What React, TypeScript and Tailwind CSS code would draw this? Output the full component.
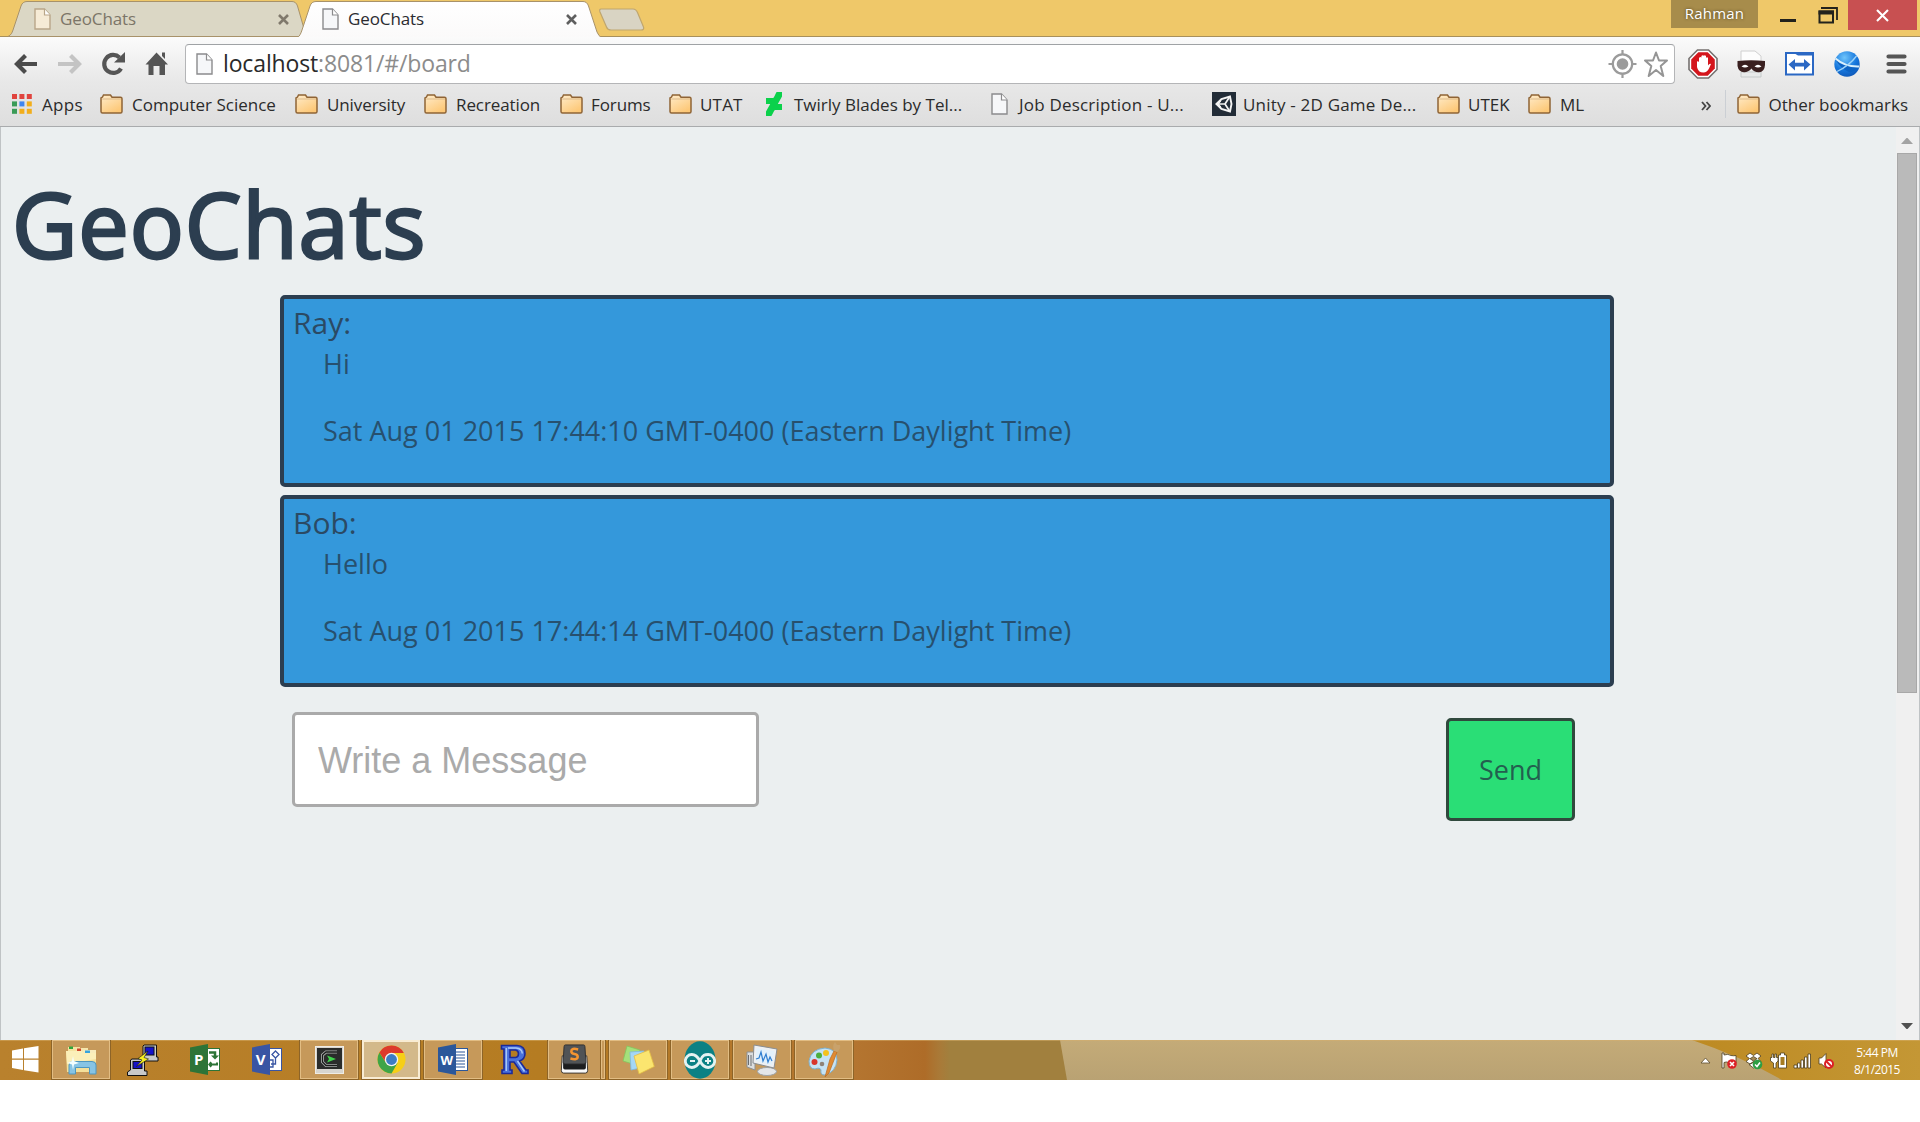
import type { ReactNode } from 'react';

/* ---------- small drawings ---------- */

function PageIcon({ faded = false }: { faded?: boolean }) {
  return (
    <svg width="17" height="22" viewBox="0 0 17 22" className="block shrink-0">
      <path
        d="M1 1H10.5L16 7V21H1Z"
        fill={faded ? '#f6ebd6' : '#f6f7f9'}
        stroke={faded ? '#b9a689' : '#8b8b8d'}
        strokeWidth="1.4"
      />
      <path d="M10.5 1V7H16" fill="#fff" stroke={faded ? '#b9a689' : '#8b8b8d'} strokeWidth="1.2" />
    </svg>
  );
}

function FolderIcon() {
  return (
    <svg width="23" height="20" viewBox="0 0 23 20" className="block shrink-0">
      <defs>
        <linearGradient id="folder" x1="0" y1="0" x2="0.6" y2="1">
          <stop offset="0" stopColor="#ffeccb" />
          <stop offset="1" stopColor="#fdc877" />
        </linearGradient>
      </defs>
      <path
        d="M1 17.5V4L2.5 3L3.5 1H10.5L12 3.2H20.5Q22 3.2 22 4.8V17.5Q22 19 20.5 19H2.5Q1 19 1 17.5Z"
        fill="url(#folder)"
        stroke="#8f6436"
        strokeWidth="1.5"
      />
      <path d="M2.2 5H21" stroke="#d9b98c" strokeWidth="1" />
    </svg>
  );
}

function AppsIcon() {
  const colors = ['#e0443e', '#e0443e', '#e0443e', '#3a9b57', '#3f86f2', '#f2ae1c', '#3a9b57', '#f2ae1c', '#f2ae1c'];
  return (
    <svg width="20" height="20" viewBox="0 0 20 20" className="block shrink-0">
      {colors.map((c, i) => (
        <rect key={i} x={(i % 3) * 7.4} y={Math.floor(i / 3) * 7.4} width="5" height="5" fill={c} />
      ))}
    </svg>
  );
}

function DeviantArtIcon() {
  return (
    <svg width="16" height="24" viewBox="0 0 16 24" className="block shrink-0">
      <path
        d="M16 0V4.5L11.8 12H16V18H9L8.2 18.8L6 23L5.4 24H0V19.6L4.2 12H0V6H7L7.8 5.4L10 1L10.6 0Z"
        fill="#0bd14b"
      />
    </svg>
  );
}

function UnityIcon() {
  return (
    <svg width="24" height="24" viewBox="0 0 24 24" className="block shrink-0">
      <rect width="24" height="24" fill="#222c37" />
      <path
        d="M5 12L9.500 7L18 4.500L19.500 12L18 19.500L9.500 17Z"
        fill="none"
        stroke="#f4f4f4"
        strokeWidth="1.900"
      />
      <path d="M5 12H13M13 12L17.500 5M13 12L17.500 19" stroke="#f4f4f4" strokeWidth="1.700" />
      <path d="M3 12L9 6.5V9.5L7 12L9 14.5V17.5Z" fill="#f4f4f4" />
    </svg>
  );
}

/* ---------- browser chrome ---------- */

function Tab({ active = false }: { active?: boolean }) {
  return (
    <div className={active ? 'relative z-10 -ml-[9px] h-[37px] w-[305px]' : 'relative ml-2 h-[37px] w-[298px]'}>
      <svg
        className="absolute inset-0"
        width={active ? 305 : 298}
        height="37"
        viewBox={active ? '0 0 305 37' : '0 0 298 37'}
      >
        <defs>
          <linearGradient id="activeTab" x1="0" y1="0" x2="0" y2="1">
            <stop offset="0" stopColor="#ffffff" />
            <stop offset="1" stopColor="#fbfafa" />
          </linearGradient>
        </defs>
        <path
          d={
            active
              ? 'M0 38C3 36 4 33 5 30L13 6Q14.500 1.500 19 1.500H286Q290 1.500 291.500 6L300 32Q301.500 36 305 38Z'
              : 'M0 36.500C3 35 4 33 5 30L13 6Q14.500 1.500 19 1.500H284Q288 1.500 289.500 6L297 32L298 36.500Z'
          }
          fill={active ? 'url(#activeTab)' : '#dbd7c5'}
          stroke="#a8926a"
          strokeWidth="1"
        />
      </svg>
      <div className={active ? 'relative flex h-[37px] items-center pl-[25px]' : 'relative flex h-[37px] items-center pl-[26px]'}>
        <PageIcon faded={!active} />
        <span
          className={
            active
              ? 'ml-[9px] w-[218px] text-[17px] tracking-[-0.1px] text-[#2b2b30]'
              : 'ml-[9px] w-[218px] text-[17px] tracking-[-0.1px] text-[#7b7568]'
          }
        >
          GeoChats
        </span>
        <svg width="11" height="11" viewBox="0 0 11 11" className="mt-[2px]">
          <path d="M1 1L10 10M10 1L1 10" stroke={active ? '#5f5f5f' : '#80796c'} strokeWidth="2.6" />
        </svg>
      </div>
    </div>
  );
}

function TitleBar() {
  return (
    <div className="flex h-[37px] items-start border-b border-[#a8905c] bg-[#efc869]">
      <Tab />
      <Tab active />
      <svg width="48" height="23" viewBox="0 0 48 23" className="mt-2 -ml-[4px]">
        <path
          d="M3 1H35Q38 1 39.500 4.500L45.500 19Q46.500 22 43 22H13Q9.500 22 8.500 19L2 4Q1 1 3 1Z"
          fill="#d9d4c3"
          stroke="#bfa66f"
          strokeWidth="1.200"
        />
      </svg>
      <div className="ml-auto flex items-start">
        <div className="flex h-[28px] w-[87px] items-center justify-center bg-[#a78c4b] pb-px text-[15px] text-white [text-shadow:0_0_3px_#4c3e1e]">
          <span className="tracking-[0.2px]">Rahman</span>
        </div>
        <svg width="90" height="30" viewBox="0 0 90 30">
          <rect x="22" y="19" width="16" height="3" fill="#22221c" />
          <path d="M63 8H79V20" fill="none" stroke="#22221c" strokeWidth="1.800" />
          <rect x="61.500" y="11.500" width="13.500" height="11" fill="none" stroke="#22221c" strokeWidth="2" />
          <rect x="60.500" y="10.500" width="15.500" height="4" fill="#22221c" />
        </svg>
        <div className="mr-[3px] flex h-[30px] w-[69px] items-center justify-center bg-[#c85051]">
          <svg width="13" height="13" viewBox="0 0 13 13">
            <path d="M1 1L12 12M12 1L1 12" stroke="#fff" strokeWidth="2.100" />
          </svg>
        </div>
      </div>
    </div>
  );
}

function Toolbar() {
  return (
    <div className="flex h-[50px] items-center pt-[3px]">
      <svg width="185" height="40" viewBox="0 0 185 40" className="block shrink-0">
        <path d="M37 20H18M25.500 11.500L17 20L25.500 28.500" fill="none" stroke="#4b4b4b" strokeWidth="4.200" />
        <path d="M58 20H78M70.500 11.500L79 20L70.500 28.500" fill="none" stroke="#c4c4c4" strokeWidth="4.200" />
        <path d="M121 24.500A9 9 0 1 1 119.500 13.500" fill="none" stroke="#555" strokeWidth="4.200" />
        <path d="M125 8V18.500H114Z" fill="#555" />
        <path d="M156.500 8.500L168 20.500H165V31H159.500V22H153.500V31H148.500V20.500H145.500Z" fill="#555" />
        <path d="M162 8.500H165V15L162 12Z" fill="#555" />
      </svg>
      <div className="flex h-[40px] w-[1490px] items-center rounded-[4px] border-[1.5px] border-[#b4b5b7] border-t-[#9fa2a5] bg-white pl-[10px]">
        <PageIcon />
        <span className="ml-[10px] text-[23px] leading-none tracking-[-0.14px] text-[#8c8c8c]">
          <span className="text-[#2a2a2a]">localhost</span>:8081/#/board
        </span>
        <svg width="60" height="34" viewBox="0 0 60 34" className="mr-[5px] ml-auto overflow-visible">
          <circle cx="13.500" cy="17" r="9.700" fill="none" stroke="#9b9b9b" strokeWidth="2.200" />
          <circle cx="13.500" cy="17" r="5.800" fill="#9b9b9b" />
          <path d="M13.500 3V8M13.500 26V31M-.5 17H4M23 17H27.500" stroke="#9b9b9b" strokeWidth="2.200" />
          <path
            d="M47 5.500L50 13.500H58L51.700 19L54.300 29L47 23L39.700 29L42.300 19L36 13.500H44Z"
            fill="#fff"
            stroke="#959595"
            strokeWidth="2"
            strokeLinejoin="round"
          />
        </svg>
      </div>
      <svg width="245" height="40" viewBox="1 0 245 40" className="block shrink-0">
        <defs>
          <radialGradient id="globe" cx="0.4" cy="0.25" r="0.8">
            <stop offset="0" stopColor="#6fc4fb" />
            <stop offset="0.6" stopColor="#1677dd" />
            <stop offset="1" stopColor="#0f57b6" />
          </radialGradient>
        </defs>
        <path d="M23.500 6H34.500L43 14.500V25.500L34.500 34H23.500L15 25.500V14.500Z" fill="#fff" stroke="#75706f" strokeWidth="1.600" />
        <path d="M24.300 8.300H33.700L40.800 15.400V24.600L33.700 31.700H24.300L17.200 24.600V15.400Z" fill="#d4151c" />
        <path
          d="M23 17.500V23Q24 28.500 29.500 28.500Q33 28.500 35 24.500L37 20Q35.500 18.800 34 21.500V13.800Q33 12.600 32 13.800V12Q30.800 10.700 29.700 12V11.500Q28.400 10.700 27.400 12V13.500Q26.200 12.500 25 14V18Q24 16.800 23 17.500Z"
          fill="#fff"
        />
        <path d="M67 20V7H81L87 12V20Z" fill="#fdfdfd" stroke="#d0d0d0" />
        <path d="M67 28H87V33H67Z" fill="#e8eaea" stroke="#c5caca" />
        <path d="M63.500 17Q77 15.500 91 17V21Q90.500 28 85 28.300Q80 28.500 77.500 24.500Q74 28.500 70 28.300Q64.500 28 63.500 22Z" fill="#3a2020" />
        <path d="M67.500 22.500Q71 19 74.500 22.500Q71 24.500 67.500 22.500ZM80.500 22.500Q84 19 87.500 22.500Q84 24.500 80.500 22.500Z" fill="#fff" />
        <rect x="112" y="9" width="27" height="21.500" fill="#fff" stroke="#2b68c4" strokeWidth="2" />
        <path d="M111 8H140V11.500H124L121 9.800H111Z" fill="#2b68c4" />
        <path d="M114.500 20.500L121 15V18.800H130V15L136.500 20.500L130 26.500V22.500H121V26.500Z" fill="#2b68c4" />
        <circle cx="173" cy="20" r="12.700" fill="url(#globe)" />
        <path d="M161 15Q172 22 185 22Q180 29 175 28Q167 25 161 15Z" fill="#0d63c4" />
        <path d="M161.500 14.500Q171 23 185 22.500" fill="none" stroke="#d9f0fd" strokeWidth="2" />
        <path d="M163 27.500Q175 22 182.500 12" fill="none" stroke="#9fd4f8" strokeWidth="1.300" />
        <path d="M214.500 12.500H230.500M214.500 20H230.500M214.500 27.500H230.500" stroke="#555" strokeWidth="4.200" strokeLinecap="round" />
      </svg>
    </div>
  );
}

function Bookmark({ icon, label, className }: { icon: ReactNode; label: string; className: string }) {
  return (
    <div className={`flex h-full shrink-0 items-center whitespace-nowrap ${className}`}>
      {icon}
      <span className="pt-[2px]">{label}</span>
    </div>
  );
}

function BookmarksBar() {
  return (
    <div className="flex h-[39px] items-center pb-[5px] pl-[12px] text-[17px] text-[#2b2b2b]">
      <Bookmark className="w-[88px] gap-[10px] tracking-[0.3px]" icon={<AppsIcon />} label="Apps" />
      <Bookmark className="w-[195px] gap-[9px]" icon={<FolderIcon />} label="Computer Science" />
      <Bookmark className="w-[129px] gap-[9px] tracking-[-0.1px]" icon={<FolderIcon />} label="University" />
      <Bookmark className="w-[136px] gap-[9px] tracking-[-0.1px]" icon={<FolderIcon />} label="Recreation" />
      <Bookmark className="w-[109px] gap-[8px] tracking-[-0.1px]" icon={<FolderIcon />} label="Forums" />
      <Bookmark className="w-[97px] gap-[8px] tracking-[0.2px]" icon={<FolderIcon />} label="UTAT" />
      <Bookmark className="w-[225px] gap-[12px]" icon={<DeviantArtIcon />} label="Twirly Blades by Tel..." />
      <Bookmark className="w-[221px] gap-[11px] tracking-[0.2px]" icon={<PageIcon />} label="Job Description - U..." />
      <Bookmark className="w-[225px] gap-[7px] tracking-[0.2px]" icon={<UnityIcon />} label="Unity - 2D Game De..." />
      <Bookmark className="w-[91px] gap-[8px]" icon={<FolderIcon />} label="UTEK" />
      <Bookmark className="gap-[9px]" icon={<FolderIcon />} label="ML" />
      <svg width="10" height="10" viewBox="0 0 10 10" className="mt-[3px] ml-auto shrink-0">
        <path d="M1 1L4.500 5L1 9M5.500 1L9 5L5.500 9" fill="none" stroke="#444" strokeWidth="1.800" />
      </svg>
      <div className="mr-[11px] ml-[14px] h-[28px] w-px bg-[#cbcfd4]" />
      <Bookmark className="mr-[12px] gap-[8px]" icon={<FolderIcon />} label="Other bookmarks" />
    </div>
  );
}

/* ---------- chat page ---------- */

function Message({ author, text, time }: { author: string; text: string; time: string }) {
  return (
    <article className="h-[192px] rounded-[5px] border-4 border-[#2c3e50] bg-[#3498db] pl-[9px] text-[27px] text-[#27506e]">
      <div className="mt-[2px] h-[44px] text-[30px] leading-[44px] text-[#2b4a64]">{author}:</div>
      <p className="h-[37px] pl-[30px] leading-[37px]">{text}</p>
      <p className="mt-[30px] h-[37px] pl-[30px] leading-[37px]">{time}</p>
    </article>
  );
}

function Board() {
  return (
    <main className="flex-1">
      <h1 className="mt-[36px] ml-[11px] h-[120px] text-[90px] leading-[120px] tracking-[0.9px] text-[#2c3e50] [-webkit-text-stroke:2.8px_#2c3e50]">
        GeoChats
      </h1>
      <div className="mt-[12px] ml-[279px] w-[1334px] space-y-[8px]">
        <Message author="Ray" text="Hi" time="Sat Aug 01 2015 17:44:10 GMT-0400 (Eastern Daylight Time)" />
        <Message author="Bob" text="Hello" time="Sat Aug 01 2015 17:44:14 GMT-0400 (Eastern Daylight Time)" />
      </div>
      <form className="mt-[25px] ml-[291px] flex w-[1283px] items-start justify-between">
        <input
          type="text"
          placeholder="Write a Message"
          className="h-[95px] w-[467px] rounded-[5px] border-[3px] border-[#aaaaaa] bg-white pt-[2px] pl-[23px] font-['Liberation_Sans',sans-serif] text-[36px] placeholder:text-[#aaaaaa]"
        />
        <button
          type="button"
          className="mt-[6px] h-[103px] w-[129px] rounded-[5px] border-[3px] border-[#30493d] bg-[#2ade76] pt-[2px] text-[27px] text-[#235f4f]"
        >
          Send
        </button>
      </form>
    </main>
  );
}

function Scrollbar() {
  return (
    <div className="flex w-[23px] flex-col items-center bg-[#f0f0f0] pr-px">
      <svg width="14" height="8" viewBox="0 0 14 8" className="mt-[10px]">
        <path d="M1 7L6.500 1H7.500L13 7Z" fill="#a3a3a3" />
      </svg>
      <div className="mt-[8px] h-[540px] w-[20px] border border-[#a8a8a8] bg-[#bababa]" />
      <svg width="14" height="8" viewBox="0 0 14 8" className="mt-auto mb-[10px]">
        <path d="M1 1H13L7.500 7H6.500Z" fill="#505050" />
      </svg>
    </div>
  );
}

/* ---------- taskbar ---------- */

function TaskButton({ state = 'idle', className, children }: { state?: 'idle' | 'open' | 'active'; className: string; children: ReactNode }) {
  const look =
    state === 'active'
      ? 'border-2 border-[#f8ecd3] bg-[#d3b98a] shadow-[0_0_0_1px_#8d6428]'
      : state === 'open'
        ? 'border border-[#e2bd83] bg-[#c6995a] shadow-[0_0_0_1px_#8d6428]'
        : '';
  return <div className={`flex h-[39px] shrink-0 items-center justify-center ${look} ${className}`}>{children}</div>;
}

function StartIcon() {
  return (
    <svg width="27" height="27" viewBox="0 0 27 27">
      <path d="M0 4.500L11 2.500V12.500H0ZM12 2.300L26.500 0V12.500H12ZM0 13.700H11V24L0 22ZM12 13.700H26.500V26.500L12 24.200Z" fill="#fff" />
    </svg>
  );
}

function ExplorerIcon() {
  return (
    <svg width="32" height="30" viewBox="0 0 32 30">
      <path d="M3 2H15V8H3Z" fill="#f5e3a0" />
      <path d="M4 1.500H8V4H4Z" fill="#2fa63c" />
      <path d="M11 3H23V9H11Z" fill="#f5e6ac" />
      <path d="M12 3.500H16V6H12Z" fill="#d1452b" />
      <path d="M18 5H31V10H18Z" fill="#f7ebbc" />
      <path d="M20 5.500H25V8H20Z" fill="#37a3dc" />
      <path d="M1 6H17L19 8H31V27H2Z" fill="#f4e09a" />
      <path d="M1 6H17L19 8H31V14L2 19Z" fill="#fbefb9" />
      <path d="M4 29V20Q4 16.500 8 16.500H27Q31 16.500 31 20V29H24.500V22.500H10.500V29Z" fill="#87c4e4" stroke="#4e97bf" />
      <path d="M8 11L9 16L14 18L9 19.500L8 25L7 19.500L2.500 18L7 16Z" fill="#f4ffff" />
    </svg>
  );
}

function PuttyIcon() {
  return (
    <svg width="32" height="32" viewBox="0 0 32 32" stroke="#111" strokeWidth="1">
      <path d="M17 1H29.500V13H31V17H14V13H16V2Z" fill="#c9c9c9" />
      <rect x="18" y="3" width="9" height="8" fill="#1512c9" />
      <path d="M5 15H17.500V27H20V31.500H.5V28L3.500 26V16Z" fill="#c9c9c9" />
      <rect x="6" y="17.500" width="9" height="7" fill="#1512c9" />
      <path d="M21 7L11 14.500L15 16L9.500 22.500L21.500 15L17 13.500Z" fill="#f7ef22" strokeWidth=".6" />
    </svg>
  );
}

function OfficeIcon({ letter, kind }: { letter: string; kind: 'project' | 'visio' | 'word' }) {
  const color = kind === 'project' ? '#2d7437' : kind === 'visio' ? '#3955a3' : '#2b579a';
  return (
    <svg width="30" height="31" viewBox="0 0 30 31">
      <rect x="16" y="4.500" width="13.500" height="22" fill="#fff" stroke={color} />
      {kind === 'project' && (
        <>
          <path d="M19 8.500H25V12" fill="none" stroke={color} strokeWidth="2.500" />
          <path d="M21 11.500H29L25 15.500Z" fill={color} />
          <path d="M27 18.500V20.500H23" fill="none" stroke={color} strokeWidth="2" />
          <path d="M20.500 17.500L23.500 20.500L20.500 23.500L18 20.500Z" fill={color} />
        </>
      )}
      {kind === 'visio' && (
        <path d="M23.500 7L27 10.500L23.500 14L20 10.500ZM23.500 14V20H19M17 16H21V23H17" fill="none" stroke={color} strokeWidth="1.300" />
      )}
      {kind === 'word' && (
        <path d="M18 8H27M18 11H27M18 14H27M18 17H27M18 20H27M18 23H27" stroke={color} strokeWidth="1.200" />
      )}
      <path d="M0 3.500L18 0V31L0 27.500Z" fill={color} />
      <text x="8.700" y="20.500" textAnchor="middle" fill="#fff" fontFamily="Open Sans, sans-serif" fontWeight="700" fontSize={kind === 'word' ? 13 : 15}>
        {letter}
      </text>
    </svg>
  );
}

function CmderIcon() {
  return (
    <svg width="29" height="28" viewBox="0 0 29 28">
      <rect x=".5" y=".5" width="28" height="27" fill="#d7d5cf" stroke="#efece5" />
      <rect x="2" y="2" width="25" height="21" fill="#2a2c2b" />
      <path d="M22 6H11L7.500 9V16L11 19.500H22" fill="none" stroke="#a9adab" strokeWidth="3" />
      <path d="M22 6H11L7.500 9V16L11 19.500H22" fill="none" stroke="#191b1a" strokeWidth="1.300" />
      <path d="M12 9.500L21 13L12 16.500L14 13Z" fill="#3fd44b" />
    </svg>
  );
}

function ChromeIcon() {
  return (
    <svg width="29" height="29" viewBox="0 0 29 29">
      <circle cx="14.500" cy="14.500" r="14" fill="#f6cf17" />
      <path d="M2.400 7.500A14 14 0 0 0 14.500 28.500L20.500 18L14.500 20L8.500 17Z" fill="#3fa447" />
      <path d="M2.400 7.500A14 14 0 0 1 26.800 8H14.500L8.600 17Z" fill="#dc3a2c" />
      <circle cx="14.500" cy="14.500" r="6.700" fill="#f3f3f0" />
      <circle cx="14.500" cy="14.500" r="5.400" fill="#3c7cc4" />
    </svg>
  );
}

function RIcon() {
  return (
    <svg width="30" height="31" viewBox="0 0 30 31">
      <path
        d="M1.500 1.500H17Q25 2 25 9.500Q25 15 19.500 17L26 26H28V29.500H22L14 18H10V26H12V29.500H2V26H4V5H1.500ZM10 6V13.500H15.500Q18.500 13 18.500 9.700Q18.500 6.500 15.500 6Z"
        fill="#4a72dc"
        fillRule="evenodd"
        stroke="#1b2a9a"
        strokeWidth="1.600"
      />
      <path d="M6.300 4V27M8 4H16Q22 4.500 22.300 9.500M17.500 17L24.500 27.500" fill="none" stroke="#a9c8f6" strokeWidth="1.500" />
    </svg>
  );
}

function SublimeIcon() {
  return (
    <svg width="29" height="30" viewBox="0 0 30 33">
      <path d="M1.500 13L.5 29Q.5 32 3 32H27Q29.500 32 29.500 29L28.500 13Z" fill="#f8f8f8" stroke="#2e2b28" />
      <path d="M2.500 20H27.500V26Q27.500 28 25.500 28H4.500Q2.500 28 2.500 26Z" fill="#1c1d1f" />
      <path d="M5 1H25Q26.500 1 26.500 3L27.500 20Q27.500 22 25.500 22H4.500Q2.500 22 2.500 20L3.500 3Q3.500 1 5 1Z" fill="#505356" stroke="#2a2b2d" />
      <path d="M19 6Q11.500 4 11.500 8Q11.500 10.500 15 11Q18.500 11.500 18.500 14Q18.500 18 10.500 16" fill="none" stroke="#f49430" strokeWidth="2.800" />
    </svg>
  );
}

function NotesIcon() {
  return (
    <svg width="33" height="30" viewBox="0 0 33 30">
      <path d="M5 1L18 5L14 20L1 16Z" fill="#a5e07b" stroke="#84c45d" strokeWidth=".8" />
      <path d="M8 7L22 6L23 22L9 25Z" fill="#a4d7f5" stroke="#7fb9dc" strokeWidth=".8" />
      <path d="M12 11L27 5L32.300 21.500L17 29Z" fill="#fbe56f" stroke="#e3bd42" strokeWidth=".8" />
    </svg>
  );
}

function ArduinoIcon() {
  return (
    <svg width="32" height="38" viewBox="0 0 32 38">
      <ellipse cx="16" cy="19" rx="15.500" ry="18.700" fill="#0b8184" />
      <path
        d="M16 20C12.500 13.500 9.500 13.500 7.800 13.500A6 6 0 0 0 7.800 26.500C11 26.500 13.500 25 16 20C18.500 13.500 21.500 13.500 24.200 13.500A6 6 0 0 1 24.200 26.500C21 26.500 18.500 25 16 20Z"
        fill="none"
        stroke="#e4f2f1"
        strokeWidth="2.800"
      />
      <path d="M6 20H11M21 20H27M24 17V23" stroke="#e4f2f1" strokeWidth="2" />
    </svg>
  );
}

function MonitorIcon() {
  return (
    <svg width="32" height="32" viewBox="0 0 32 32">
      <path d="M1 8H9V26L1 23Z" fill="#dcdedf" stroke="#8c8f92" />
      <path d="M2.500 11V21M5 11V22" stroke="#6b6e72" />
      <ellipse cx="21" cy="27.500" rx="9.500" ry="4" fill="#e4e6e8" stroke="#9ea2a5" />
      <path d="M8 1L31 5L28 24L7 19Z" fill="#eef0f2" stroke="#898e93" />
      <path d="M10.500 4L28.500 7L26 21L9.500 17Z" fill="#e3f1fb" />
      <path d="M10 15L13 14L15 8L17 17L20 10L22 18L24 13L26 17" fill="none" stroke="#2f7ed0" strokeWidth="1.200" />
    </svg>
  );
}

function PaintIcon() {
  return (
    <svg width="33" height="37" viewBox="0 0 33 37">
      <path d="M17 7Q29 8 29 19Q28 31 17 34Q12 34 13 29Q12 26 7 28Q1 28 1 20Q3 8 17 7Z" fill="#c6e3f4" stroke="#7eb2d2" />
      <circle cx="6.500" cy="21" r="3" fill="#d8362c" />
      <circle cx="11" cy="14.500" r="3" fill="#4caf3e" />
      <circle cx="18" cy="12" r="3" fill="#f5c21c" />
      <circle cx="14" cy="23" r="2.300" fill="#8f8377" />
      <path d="M26 10L22 18L17 36L21 32L26 19L29 11Z" fill="#e08a32" stroke="#b96b20" strokeWidth=".7" />
      <path d="M26 10Q24 4 27 1L29 4L32 4Q33 8 29 11Z" fill="#c9a26b" />
    </svg>
  );
}

function TrayIcons() {
  return (
    <svg width="136" height="20" viewBox="0 0 136 20" className="block">
      <path d="M1 12L5.500 7L10 12Z" fill="#fff" stroke="#5a4a2b" strokeWidth=".8" />
      <g stroke="#4b3d1e" strokeWidth=".8" fill="#fff">
        <path d="M22 2H24V4Q28 2.500 31 4.500Q34 5 36 4.500V12Q32 13 29 11.500Q26 10.500 24 11.500V17H22Z" />
        <path d="M46 5L50 2L53.500 4.500L57 2L61 5L58 7.500L61 10.500L57 13L53.500 10.500L50 13L46 10.500L49.500 7.500ZM49 13.500L53.500 11.500L58 13.500L53.500 17Z" />
        <path d="M53.500 5.500L57 7.700L53.500 10L50 7.700Z" fill="#a48a55" />
        <path d="M70.500 6.500H72V3H73.500V6.500H75V3H76.500V6.500H78V10L76 12V17H73.500V12L70.500 10Z" />
        <path d="M78.500 4H80.500V2H84.500V4H86.500V17H78.500Z" />
        <path d="M94 14H97V17H94ZM97.500 12H100V17H97.500ZM101 9H103.500V17H101ZM104.500 6H107V17H104.500ZM108 3H110.500V17H108Z" />
        <path d="M119 7H121.500L126 2.500V17L121.500 13H119Z" />
      </g>
      <rect x="80.500" y="6" width="4" height="8" fill="#a67c22" />
      <circle cx="32" cy="13" r="4.800" fill="#dc2026" />
      <path d="M30 11L34 15M34 11L30 15" stroke="#fff" strokeWidth="1.600" />
      <circle cx="57.500" cy="13.500" r="4.800" fill="#2e9e44" />
      <path d="M55 13.500L57 15.500L60 11.500" fill="none" stroke="#fff" strokeWidth="1.500" />
      <circle cx="129" cy="13" r="4" fill="#fff" stroke="#dc2026" strokeWidth="2" />
      <path d="M126 10L132 16" stroke="#dc2026" strokeWidth="2" />
    </svg>
  );
}

function Taskbar() {
  return (
    <footer className="relative flex h-[40px] items-start overflow-hidden bg-[linear-gradient(90deg,#b9812d_0px,#b57c22_540px,#b47530_855px,#ae6c28_925px,#a97a38_940px,#a1803e_950px,#a1803e_1064px)]">
      <svg className="absolute inset-0" width="1920" height="40" viewBox="0 0 1920 40">
        <defs>
          <linearGradient id="sand" x1="0" y1="0" x2="0" y2="1">
            <stop offset="0" stopColor="#c4ab78" />
            <stop offset="1" stopColor="#b9a273" />
          </linearGradient>
          <linearGradient id="gold" x1="0" y1="0" x2="1" y2="0">
            <stop offset="0" stopColor="#bd8a22" />
            <stop offset="1" stopColor="#c49735" />
          </linearGradient>
        </defs>
        <path d="M1060 0H1920V40H1067Z" fill="url(#sand)" />
        <path d="M1692 0H1920V40H1782Q1740 16 1692 0Z" fill="url(#gold)" />
        <path d="M0 .5H1920" stroke="#d8b06c" strokeOpacity=".5" />
      </svg>
      <div className="relative flex h-[40px] w-full items-start pl-[12px]">
        <div className="flex h-[38px] w-[40px] items-center"><StartIcon /></div>
        <TaskButton state="open" className="w-[58px]"><ExplorerIcon /></TaskButton>
        <TaskButton className="ml-[4px] w-[58px]"><PuttyIcon /></TaskButton>
        <TaskButton className="ml-[4px] w-[58px]"><OfficeIcon letter="P" kind="project" /></TaskButton>
        <TaskButton className="ml-[4px] w-[58px]"><OfficeIcon letter="V" kind="visio" /></TaskButton>
        <TaskButton state="open" className="ml-[4px] w-[58px]"><CmderIcon /></TaskButton>
        <TaskButton state="active" className="ml-[4px] w-[58px]"><ChromeIcon /></TaskButton>
        <TaskButton state="open" className="ml-[4px] w-[58px]"><OfficeIcon letter="W" kind="word" /></TaskButton>
        <TaskButton className="ml-[4px] w-[58px]"><RIcon /></TaskButton>
        <TaskButton state="open" className="ml-[4px] w-[53px]"><div className="pb-[2px]"><SublimeIcon /></div></TaskButton>
        <TaskButton state="open" className="w-[4px]">{null}</TaskButton>
        <TaskButton state="open" className="ml-[4px] w-[58px]"><NotesIcon /></TaskButton>
        <TaskButton state="open" className="ml-[4px] w-[58px]"><ArduinoIcon /></TaskButton>
        <TaskButton state="open" className="ml-[4px] w-[58px]"><MonitorIcon /></TaskButton>
        <TaskButton state="open" className="ml-[4px] w-[58px]"><PaintIcon /></TaskButton>
        <div className="mt-[11px] ml-auto"><TrayIcons /></div>
        <div className="mt-[4px] mr-[16px] ml-[14px] w-[54px] text-center text-[12px] leading-[17px] tracking-[-0.5px] text-white">
          <div>5:44 PM</div>
          <div>8/1/2015</div>
        </div>
      </div>
    </footer>
  );
}

export default function App() {
  return (
    <div className="h-[1122px] w-[1920px] overflow-hidden bg-white font-['Open_Sans',sans-serif]">
      <TitleBar />
      <div className="h-[90px] border-b-[1.5px] border-[#a9abad] bg-gradient-to-b from-[#fbfbfb] via-[#e8e8e8] to-[#dedede]">
        <Toolbar />
        <BookmarksBar />
      </div>
      <div className="flex h-[913px] border-x border-[#bfc3c5] bg-[#ebeff0]">
        <Board />
        <Scrollbar />
      </div>
      <Taskbar />
    </div>
  );
}
